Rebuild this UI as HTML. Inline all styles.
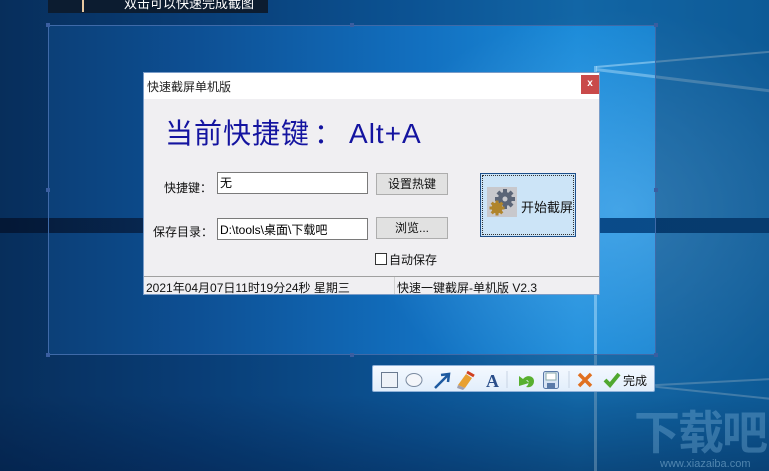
<!DOCTYPE html>
<html><head><meta charset="utf-8"><style>
*{margin:0;padding:0;box-sizing:border-box}
body{width:769px;height:471px;overflow:hidden;position:relative;font-family:"Liberation Sans","Noto Sans CJK SC",sans-serif;
background:linear-gradient(90deg,#0b3a6e 0%,#0d4f93 25%,#1270c0 55%,#1a8ad8 75%,#1479c2 100%);}
.abs{position:absolute}
</style></head><body>
<div class="abs" style="left:0;top:0;width:769px;height:471px;background:radial-gradient(ellipse 260px 200px at 620px 210px,rgba(120,200,255,.45),rgba(0,0,0,0) 100%)"></div>
<div class="abs" style="left:0;top:395px;width:769px;height:76px;background:linear-gradient(180deg,rgba(0,20,60,0),rgba(0,20,60,.35))"></div>
<div class="abs" style="left:596px;top:66px;width:180px;height:2px;background:rgba(200,235,255,.45);transform:rotate(-5deg);transform-origin:left"></div>
<div class="abs" style="left:596px;top:68px;width:180px;height:3px;background:rgba(200,235,255,.4);transform:rotate(7deg);transform-origin:left"></div>
<div class="abs" style="left:594px;top:66px;width:3px;height:405px;background:rgba(190,230,255,.45)"></div>
<div class="abs" style="left:0;top:218px;width:769px;height:15px;background:linear-gradient(90deg,#061a38,#083468 40%,#0a4a8a 70%,#0b4d88)"></div>
<div class="abs" style="left:655px;top:381px;width:120px;height:2px;background:rgba(200,235,255,.4);transform:rotate(-3deg)"></div>
<div class="abs" style="left:655px;top:392px;width:120px;height:2px;background:rgba(200,235,255,.4);transform:rotate(6deg)"></div>
<div class="abs" style="left:0;top:0;width:769px;height:25px;background:rgba(0,20,50,.3)"></div>
<div class="abs" style="left:0;top:355px;width:769px;height:116px;background:rgba(0,20,50,.3)"></div>
<div class="abs" style="left:0;top:25px;width:48px;height:330px;background:rgba(0,20,50,.3)"></div>
<div class="abs" style="left:656px;top:25px;width:113px;height:330px;background:rgba(0,20,50,.3)"></div>
<div class="abs" style="left:48px;top:25px;width:608px;height:330px;border:1px solid #3f6aa8"></div>
<div class="abs" style="left:46px;top:23px;width:4px;height:4px;background:#3a5ea0"></div>
<div class="abs" style="left:654px;top:23px;width:4px;height:4px;background:#3a5ea0"></div>
<div class="abs" style="left:46px;top:353px;width:4px;height:4px;background:#3a5ea0"></div>
<div class="abs" style="left:654px;top:353px;width:4px;height:4px;background:#3a5ea0"></div>
<div class="abs" style="left:46px;top:188px;width:4px;height:4px;background:#3a5ea0"></div>
<div class="abs" style="left:654px;top:188px;width:4px;height:4px;background:#3a5ea0"></div>
<div class="abs" style="left:350px;top:23px;width:4px;height:4px;background:#3a5ea0"></div>
<div class="abs" style="left:350px;top:353px;width:4px;height:4px;background:#3a5ea0"></div>
<div class="abs" style="left:48px;top:0;width:220px;height:13px;background:#0c1c30"></div>
<div class="abs" style="left:82px;top:0;width:2px;height:12px;background:#e8c8a0"></div>
<div class="abs" style="left:124px;top:-4px;font-size:13px;color:#fff;line-height:16px">双击可以快速完成截图</div>
<div class="abs" style="left:143px;top:72px;width:457px;height:223px;background:#f0eff2;border:1px solid #7a9cc8">
 <div class="abs" style="left:0;top:0;width:455px;height:26px;background:#fff"></div>
 <div class="abs" style="left:3px;top:5px;font-size:12px;color:#222">快速截屏单机版</div>
 <div class="abs" style="left:437px;top:2px;width:18px;height:19px;background:#c94a4a;color:#fff;font-size:10px;text-align:center;line-height:18px;font-weight:bold">x</div>
 <div class="abs" style="left:21px;top:39px;font-size:28px;color:#1414a0;white-space:nowrap;letter-spacing:1px">当前快捷键<span style="margin:0 6px 0 4px">：</span>Alt+A</div>
 <div class="abs" style="left:20px;top:106px;font-size:12px;color:#111">快捷键：</div>
 <div class="abs" style="left:73px;top:99px;width:151px;height:22px;background:#fff;border:1px solid #7a7a7a;font-size:12px;padding:1px 2px;color:#000">无</div>
 <div class="abs" style="left:232px;top:100px;width:72px;height:22px;background:#e1e1e1;border:1px solid #adadad;font-size:12px;text-align:center;line-height:20px;color:#111">设置热键</div>
 <div class="abs" style="left:9px;top:150px;font-size:12px;color:#111">保存目录：</div>
 <div class="abs" style="left:73px;top:145px;width:151px;height:22px;background:#fff;border:1px solid #7a7a7a;font-size:12px;padding:2px 2px;color:#000;white-space:nowrap">D:\tools\桌面\下载吧</div>
 <div class="abs" style="left:232px;top:144px;width:72px;height:22px;background:#e1e1e1;border:1px solid #adadad;font-size:12px;text-align:center;line-height:20px;color:#111">浏览...</div>
 <div class="abs" style="left:231px;top:180px;width:12px;height:12px;border:1px solid #333;background:#fff"></div>
 <div class="abs" style="left:245px;top:178px;font-size:12px;color:#111">自动保存</div>
 <div class="abs" style="left:336px;top:100px;width:96px;height:64px;background:#cce4f7;border:1px solid #1d4f8a;outline:1px dotted #333;outline-offset:-3px"></div>
 <svg class="abs" style="left:343px;top:114px" width="30" height="30" viewBox="0 0 30 30">
  <rect width="30" height="30" fill="#c8c8cc"/>
  <g fill="#5b6577"><circle cx="18" cy="12" r="7"/><rect x="16" y="2" width="4" height="20"/><rect x="8" y="10" width="20" height="4"/><rect x="16" y="2" width="4" height="20" transform="rotate(45 18 12)"/><rect x="16" y="2" width="4" height="20" transform="rotate(-45 18 12)"/></g>
  <circle cx="18" cy="12" r="2.5" fill="#c8c8cc"/>
  <g fill="#b0852c"><circle cx="10" cy="21" r="5.5"/><rect x="8.5" y="13.5" width="3" height="15"/><rect x="2.5" y="19.5" width="15" height="3"/><rect x="8.5" y="13.5" width="3" height="15" transform="rotate(45 10 21)"/><rect x="8.5" y="13.5" width="3" height="15" transform="rotate(-45 10 21)"/></g>
 </svg>
 <div class="abs" style="left:377px;top:124px;font-size:13px;color:#111">开始截屏</div>
 <div class="abs" style="left:0;top:203px;width:455px;height:1px;background:#a0a0a0"></div>
 <div class="abs" style="left:2px;top:206px;font-size:12px;color:#111;white-space:nowrap">2021年04月07日11时19分24秒 星期三</div>
 <div class="abs" style="left:250px;top:204px;width:1px;height:17px;background:#d0d0d0"></div>
 <div class="abs" style="left:253px;top:206px;font-size:12px;color:#111;white-space:nowrap">快速一键截屏-单机版 V2.3</div>
</div>
<div class="abs" style="left:372px;top:365px;width:283px;height:27px;background:linear-gradient(#f4f9ff,#e2eefb);border:1px solid #8fb1d8;border-radius:2px">
 <svg class="abs" style="left:0;top:0" width="283" height="27">
  <rect x="8.5" y="6.5" width="16" height="15" fill="#eef2f8" stroke="#6a7a90"/>
  <ellipse cx="41" cy="14" rx="8" ry="6.5" fill="#f4f6fa" stroke="#7a8aa0"/>
  <path d="M62 22 L75 9 M68 9 L76 8 L75 16" stroke="#1e5aa0" stroke-width="2.5" fill="none"/>
  <path d="M93 8 L99 12 L92 22 L85 19 Z" fill="#e8a030"/><path d="M94 6 L101 10" stroke="#d04020" stroke-width="3"/><path d="M85 19 L92 22 L90 24 L84 22Z" fill="#a0a0b0"/>
  <text x="113" y="21" font-family="Liberation Serif,serif" font-weight="bold" font-size="18" fill="#2a4e8a">A</text>
  <line x1="134" y1="5" x2="134" y2="22" stroke="#c8d4e4"/>
  <path d="M146 20 L146 10 L150 13 C154 8 161 10 161 15 C161 20 157 22 153 21 C156 19 157 14 153 14 L156 17 Z" fill="#58b030"/>
  <rect x="170.5" y="5.5" width="15" height="17" rx="2" fill="#d8e4f4" stroke="#5a7aa8"/><rect x="173" y="7" width="10" height="7" fill="#fff" stroke="#8aa"/><rect x="174" y="17" width="8" height="5" fill="#5a7aa8"/>
  <line x1="196" y1="5" x2="196" y2="22" stroke="#c8d4e4"/>
  <path d="M206 8 L218 20 M218 8 L206 20" stroke="#e07020" stroke-width="3.5"/>
  <path d="M232 14 L237 19 L246 8" stroke="#50a830" stroke-width="4" fill="none"/>
  <text x="250" y="19" font-size="12" fill="#111" font-family="Liberation Sans,Noto Sans CJK SC,sans-serif">完成</text>
 </svg>
</div>
<div class="abs" style="left:634px;top:408px;font-size:46px;font-weight:bold;color:rgba(120,175,215,.38);line-height:50px;letter-spacing:-2px;white-space:nowrap">下载吧</div>
<div class="abs" style="left:660px;top:458px;font-size:11px;color:rgba(150,195,225,.5);white-space:nowrap">www.xiazaiba.com</div>
</body></html>
